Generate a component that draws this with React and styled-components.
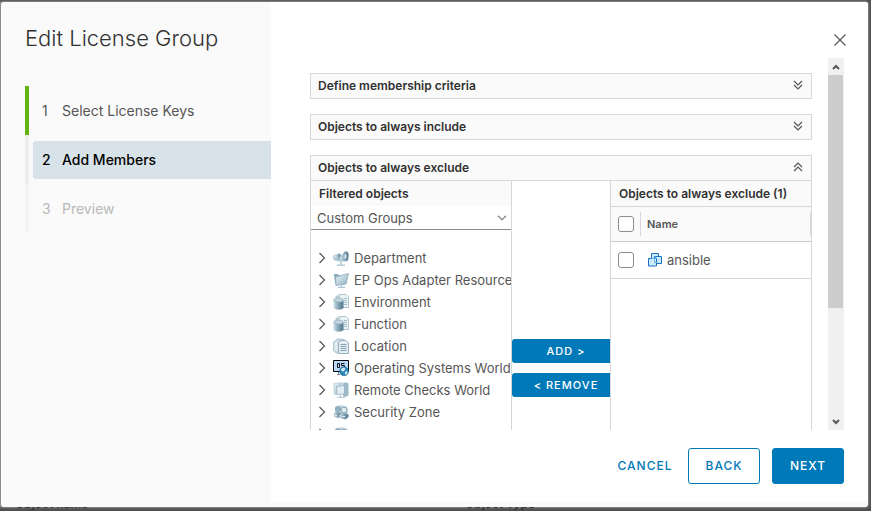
import React from "react";
import styled, { createGlobalStyle } from "styled-components";

const Global = createGlobalStyle`
  *, *::before, *::after { box-sizing: border-box; }
  body { margin: 0; background: #4f4f4f; color: #565656; font: 400 13px/22px Inter, "Open Sans", sans-serif; }
  button, select, input { font: inherit; color: inherit; margin: 0; }
  button { cursor: pointer; }
`;

const Page = styled.div`
  height: 100vh;
  display: flex;
  flex-direction: column;
  padding: 2px 3px 0 0;
`;

const Dialog = styled.section`
  flex: 1;
  min-height: 0;
  display: flex;
  border-left: 1px solid #8c8c8c;
  border-radius: 3px;
  background: #fafafa;
  box-shadow: 0 0 2px 1px #8c8c8c;
  overflow: hidden;
`;

const Backdrop = styled.div`
  flex: none;
  height: 4px;
  display: flex;
  align-items: flex-end;
  overflow: hidden;
  padding-left: 15px;
  color: #333;
  font-size: 12px;
  font-weight: 600;
  line-height: 14px;
`;

const BackdropColumn = styled.span`
  flex: none;
  width: 450px;
`;

const Sidebar = styled.nav`
  flex: none;
  width: 270px;
  padding: 19px 0 0 24px;
`;

const Title = styled.h1`
  margin: 0 0 31px;
  font-size: 22px;
  font-weight: 300;
  line-height: 34px;
  color: #313131;
`;

const Steps = styled.ol`
  list-style: none;
  margin: 0;
  padding: 0;
`;

const Step = styled.li`
  display: flex;
  align-items: center;
  height: 49px;
  padding-left: 4px;
  border-left: 4px solid ${(p) => (p.$state === "done" ? "#60b515" : p.$state === "current" ? "#eee" : "#f4f4f4")};
`;

const StepButton = styled.button`
  flex: 1;
  display: flex;
  gap: 11px;
  height: 38px;
  padding: 0 9px;
  border: 0;
  border-radius: 3px 0 0 3px;
  text-align: left;
  font-size: 14px;
  font-weight: ${(p) => (p.$state === "current" ? 500 : 400)};
  line-height: 38px;
  background: ${(p) => (p.$state === "current" ? "#d8e3e9" : "transparent")};
  color: ${(p) => (p.$state === "done" ? "#565656" : p.$state === "current" ? "#000" : "#b8b8b8")};
`;

const StepNumber = styled.span`
  flex: none;
  width: 9px;
`;

const Main = styled.main`
  flex: 1;
  min-width: 0;
  display: flex;
  flex-direction: column;
  margin-bottom: 5px;
  padding: 29px 24px 18px 39px;
  background: #fff;
`;

const CloseButton = styled.button`
  align-self: flex-end;
  display: grid;
  place-items: center;
  width: 18px;
  height: 18px;
  margin: 0 -5px 9px 0;
  padding: 0;
  border: 0;
  background: none;
`;

const ScrollArea = styled.div`
  flex: 1;
  min-height: 0;
  display: flex;
  gap: 16px;
  overflow: hidden;
`;

const Panels = styled.div`
  flex: 1;
  min-width: 0;
  display: flex;
  flex-direction: column;
  gap: 15px;
  padding-top: 15px;
`;

const Scrollbar = styled.div`
  flex: none;
  width: 16px;
  display: flex;
  flex-direction: column;
  background: #f0f0f0;
`;

const ScrollArrow = styled.button`
  display: grid;
  place-items: center;
  height: 17px;
  padding: 0;
  border: 0;
  background: none;
`;

const ScrollTrack = styled.div`
  flex: 1;
  padding-right: 1px;
`;

const ScrollThumb = styled.div`
  height: 69%;
  background: #cdcdcd;
`;

const Panel = styled.section`
  flex: none;
  border: 1px solid #d7d7d7;
`;

const PanelTitle = styled.h2`
  margin: 0;
  font-size: 12px;
  font-weight: 600;
`;

const PanelToggle = styled.button`
  display: flex;
  justify-content: space-between;
  width: 100%;
  height: 24px;
  padding: 0 8px 0 7px;
  border: 0;
  background: #fafafa;
  color: #313131;
  line-height: 24px;
`;

const PanelBody = styled.div`
  display: grid;
  grid-template-columns: 2fr 100px 2fr;
  height: 320px;
  border-top: 1px solid #d7d7d7;
`;

const Column = styled.div`
  min-width: 0;
  overflow: hidden;
`;

const ColumnTitle = styled.h3`
  margin: 0;
  height: ${(p) => (p.$ruled ? 26 : 25)}px;
  padding-left: 8px;
  border-bottom: ${(p) => (p.$ruled ? "1px solid #d7d7d7" : 0)};
  background: #fafafa;
  color: #313131;
  font-size: 12px;
  font-weight: 600;
  line-height: 25px;
`;

const Picker = styled.label`
  display: grid;
  align-items: center;
  height: 24px;
  border-bottom: 1px solid #8c8c8c;
  > * { grid-area: 1 / 1; }
  > svg { justify-self: end; margin-right: 4px; pointer-events: none; }
`;

const PickerSelect = styled.select`
  appearance: none;
  width: 100%;
  height: 23px;
  padding: 0 6px;
  border: 0;
  background: #fff;
`;

const Tree = styled.ul`
  list-style: none;
  margin: 17px 0 0;
  padding: 0 0 0 6px;
`;

const TreeRow = styled.li`
  display: flex;
  align-items: center;
  height: 22px;
  white-space: nowrap;
  > svg { flex: none; margin: 0 5px 0 6px; }
`;

const ExpandButton = styled.button`
  flex: none;
  display: grid;
  place-items: center;
  width: 10px;
  height: 22px;
  padding: 0;
  border: 0;
  background: none;
`;

const Actions = styled.div`
  display: flex;
  flex-direction: column;
  gap: 10px;
  padding-top: 158px;
  border: solid #d7d7d7;
  border-width: 0 1px;
  overflow: hidden;
`;

const MoveButton = styled.button`
  flex: none;
  width: 108px;
  height: 24px;
  padding: 0;
  border: 0;
  border-radius: 3px;
  background: #0079b8;
  color: #fff;
  font-size: 11px;
  font-weight: 500;
  letter-spacing: 1px;
  line-height: 24px;
`;

const Members = styled.table`
  width: 100%;
  border-collapse: separate;
  border-spacing: 0;
`;

const HeadCell = styled.th`
  height: 35px;
  padding: 0;
  border-bottom: 1px solid #ccc;
  background: #fafafa;
  font-size: 11px;
  font-weight: 600;
  text-align: left;
`;

const HeadInner = styled.div`
  display: flex;
  align-items: center;
  height: 24px;
  padding-left: ${(p) => (p.$check ? 7 : 6)}px;
  border-right: 1px solid #d7d7d7;
`;

const Cell = styled.td`
  height: 37px;
  padding: 0 0 0 7px;
  border-bottom: 1px solid #d7d7d7;
`;

const CheckCol = styled.col`
  width: 30px;
`;

const MemberName = styled.span`
  display: flex;
  align-items: center;
  gap: 5px;
`;

const Check = styled.input`
  display: block;
  appearance: none;
  width: 16px;
  height: 16px;
  border: 1px solid #8c8c8c;
  border-radius: 3px;
  background: #fff;
`;

const Footer = styled.footer`
  flex: none;
  display: flex;
  justify-content: flex-end;
  gap: 12px;
  padding-top: 18px;
`;

const FooterButton = styled.button`
  min-width: ${(p) => (p.$kind === "link" ? 62 : 72)}px;
  height: 36px;
  padding: 0;
  border: ${(p) => (p.$kind === "link" ? "0" : "1px solid #0079b8")};
  border-radius: 3px;
  background: ${(p) => (p.$kind === "solid" ? "#0079b8" : "transparent")};
  color: ${(p) => (p.$kind === "solid" ? "#fff" : "#0079b8")};
  font-size: 12px;
  font-weight: 500;
  letter-spacing: 1px;
`;

const Stroke = ({ w, h, d, width = 1, color = "#565656" }) => (
  <svg width={w} height={h} viewBox={`0 0 ${w} ${h}`} fill="none" stroke={color} strokeWidth={width} aria-hidden="true">
    <path d={d} />
  </svg>
);

const DoubleChevron = ({ up }) => (
  <Stroke w={10} h={22} width={1.2} d={up ? "M1 11l4-4 4 4M1 15l4-4 4 4" : "M1 7l4 4 4-4M1 11l4 4 4-4"} />
);

const Cylinder = () => (
  <>
    <path d="M.5 6v7.200C.5 14.700 2.700 15.700 5.500 15.700s5-1 5-2.500V6z" fill="url(#steel)" />
    <ellipse cx="5.500" cy="6" rx="5" ry="2" fill="#c3d6e0" stroke="#8fabba" strokeWidth=".6" />
  </>
);

const Page2 = () => (
  <>
    <path d="M3 2h8v11H3z" fill="#c8d9e1" stroke="#9fb7c3" strokeWidth=".7" />
    <path d="M6 .5h7L15.500 3v10.500H6z" fill="#eaf3f6" stroke="#9fb7c3" strokeWidth=".8" />
    <path d="M11 4.500h3M11 6.500h3M11 8.500h3M11 10.500h3" stroke="#9db5c1" strokeWidth=".9" />
  </>
);

const glyphs = {
  department: (
    <>
      <path d="M4 15.300h8M8 11.500v3" stroke="#b3cbd7" strokeWidth="1.600" />
      <path d="M3 5l6 2.500 3 3-4 2-5-2z" fill="#a9c4d2" />
      <circle cx="3" cy="7.500" r="2.800" fill="url(#pale)" stroke="#8fabba" strokeWidth=".5" />
      <circle cx="6.200" cy="5.500" r="2" fill="#7fa2b4" />
      <path d="M7.500 7l4-5.500h3l1.200 3-.7 6-3.500 1.500-3.500-1.500z" fill="url(#steel)" />
      <path d="M12 3.500l2 2-1 3.500-2.500-1z" fill="#c3d6e0" />
      <path d="M3.500 10.500l4.500 1.700 5-1.400" stroke="#dce9ef" fill="none" />
    </>
  ),
  folder: (
    <>
      <path d="M.7 2h4.500l1 1.500h7L12 11 2.500 12.500z" fill="#8fb0c1" />
      <path d="M2.700 5L15.500 1.500 13 12l-10 1.500z" fill="url(#pale)" stroke="#7fa0b2" strokeWidth=".7" />
      <path d="M8.500 13v2M5 15.400h7" stroke="#a9c4d2" strokeWidth="1.200" />
    </>
  ),
  database: <><Page2 /><Cylinder /></>,
  location: (
    <>
      <path d="M.5 4L5 .8 11 1.500v13L3 15 .5 12.500z" fill="#c8d9e1" stroke="#9fb7c3" strokeWidth=".7" />
      <path d="M1.500 5l3-2v10l-3-1z" fill="#e3edf2" />
      <path d="M5.500 4.500l2-2h5.500l2.500 2.500v10.500h-10z" fill="#e4eef2" stroke="#83a2b2" strokeWidth=".8" />
      <path d="M7.500 6.500h6M7.500 8.500h6M7.500 10.500h6M7.500 12.500h6" stroke="#88a6b5" />
    </>
  ),
  os: (
    <>
      <path d="M.5.5h15v11H.5z" fill="#b9d8fb" stroke="#000" />
      <path d="M4 14.500h3M5.500 12v2" stroke="#7d8c99" />
      <path d="M4.500 3.500h2v4h-2zM11.500 3.500h-3v2h3v2h-3" fill="none" stroke="#111" />
      <circle cx="11" cy="11.200" r="4.500" fill="#2d86b8" stroke="#226994" strokeWidth=".6" />
      <path d="M8 9l3-1.500 1.500 1.500-2 2.500-2-.5zM12 12l2.500-1-.5 3-2 .5z" fill="#d5edf7" />
    </>
  ),
  remote: (
    <>
      <path d="M.7 1.500L9 .6v11L1.500 12.500z" fill="url(#pale)" stroke="#b3cbd7" strokeWidth=".7" />
      <path d="M10 1l4-.5 1.500 1.300v11.700L12 15l-2-1z" fill="#9db9c7" />
      <path d="M3.500 4.500l8-1v8.200l-7.500 1z" fill="#e1edf3" stroke="#90adbb" strokeWidth=".7" />
      <path d="M7.500 12.500v2M4.500 15.300h7.500" stroke="#b3cbd7" strokeWidth="1.300" />
    </>
  ),
  security: (
    <>
      <path d="M2 3l6-2 6 1.500 1.500 6-5 3H2z" fill="#c8d9e1" />
      <circle cx="5" cy="5" r="3" fill="#8fb0c1" />
      <path d="M.5 12.500V9.500q4-3 8 0v4q-4 1-8-1z" fill="url(#steel)" />
      <circle cx="11" cy="6" r="3" fill="#dce8ee" stroke="#7596a8" strokeWidth=".8" />
      <path d="M6.500 14v-3.500q4.500-3 9 0V13l-3 2.500z" fill="url(#steel)" />
      <path d="M9 12.500h3M2 11.500h2" stroke="#dce9ef" />
    </>
  ),
};

const TreeIcon = ({ kind }) => (
  <svg width="16" height="16" viewBox="0 0 16 16" fill="none" aria-hidden="true">
    <defs>
      <linearGradient id="steel">
        <stop stopColor="#d3e1e8" />
        <stop offset=".4" stopColor="#92b0bf" />
        <stop offset="1" stopColor="#4d748a" />
      </linearGradient>
      <linearGradient id="pale" x2="1" y2="1">
        <stop stopColor="#edf5f8" />
        <stop offset="1" stopColor="#8eafc0" />
      </linearGradient>
    </defs>
    {glyphs[kind]}
  </svg>
);

const GroupIcon = () => (
  <svg width="14" height="14" viewBox="0 0 14 14" fill="#c9eafb" stroke="#1b6fc0" aria-hidden="true">
    <path d="M3.500.5h7v7h-7z" />
    <path d="M6.500 3.500h7v7h-7z" />
    <path d="M.5 5.500h8v7.500h-8z" />
    <path d="M3.500 5.500h4v-2M6.500 6.500v3h3" fill="none" stroke="#62b2e6" />
  </svg>
);

const steps = [
  ["Select License Keys", "done"],
  ["Add Members", "current"],
  ["Preview", "pending"],
];

const groups = [
  ["Department", "department"],
  ["EP Ops Adapter Resources", "folder"],
  ["Environment", "database"],
  ["Function", "database"],
  ["Location", "location"],
  ["Operating Systems World", "os"],
  ["Remote Checks World", "remote"],
  ["Security Zone", "security"],
  ["", "security"],
];

function PanelHeader({ title, open }) {
  return (
    <PanelTitle>
      <PanelToggle type="button" aria-expanded={!!open}>
        {title}
        <DoubleChevron up={open} />
      </PanelToggle>
    </PanelTitle>
  );
}

export default function App() {
  return (
    <Page>
      <Global />
      <Dialog role="dialog" aria-labelledby="dialog-title">
        <Sidebar>
          <Title id="dialog-title">Edit License Group</Title>
          <Steps>
            {steps.map(([label, state], i) => (
              <Step key={label} $state={state}>
                <StepButton type="button" $state={state} disabled={state === "pending"}>
                  <StepNumber>{i + 1}</StepNumber>
                  {label}
                </StepButton>
              </Step>
            ))}
          </Steps>
        </Sidebar>
        <Main>
          <CloseButton type="button" aria-label="Close">
            <Stroke w={14} h={14} width={1.2} d="M1.500 1.500l11 11M12.500 1.500l-11 11" />
          </CloseButton>
          <ScrollArea>
            <Panels>
              <Panel><PanelHeader title="Define membership criteria" /></Panel>
              <Panel><PanelHeader title="Objects to always include" /></Panel>
              <Panel>
                <PanelHeader title="Objects to always exclude" open />
                <PanelBody>
                  <Column>
                    <ColumnTitle>Filtered objects</ColumnTitle>
                    <Picker>
                      <PickerSelect aria-label="Filtered objects" defaultValue="Custom Groups">
                        <option>Custom Groups</option>
                      </PickerSelect>
                      <Stroke w={10} h={6} width={1.3} color="#8c8c8c" d="M1 .8l4 4 4-4" />
                    </Picker>
                    <Tree>
                      {groups.map(([label, kind]) => (
                        <TreeRow key={label}>
                          <ExpandButton type="button" aria-label={`Expand ${label}`}>
                            <Stroke w={8} h={12} width={1.2} d="M1.500 1l5 5-5 5" />
                          </ExpandButton>
                          <TreeIcon kind={kind} />
                          {label}
                        </TreeRow>
                      ))}
                    </Tree>
                  </Column>
                  <Actions>
                    <MoveButton type="button">ADD &gt;</MoveButton>
                    <MoveButton type="button">&lt; REMOVE</MoveButton>
                  </Actions>
                  <Column>
                    <ColumnTitle $ruled>Objects to always exclude (1)</ColumnTitle>
                    <Members>
                      <colgroup><CheckCol /><col /></colgroup>
                      <thead>
                        <tr>
                          <HeadCell><HeadInner $check><Check type="checkbox" aria-label="Select all" /></HeadInner></HeadCell>
                          <HeadCell><HeadInner>Name</HeadInner></HeadCell>
                        </tr>
                      </thead>
                      <tbody>
                        <tr>
                          <Cell><Check type="checkbox" aria-label="Select ansible" /></Cell>
                          <Cell><MemberName><GroupIcon />ansible</MemberName></Cell>
                        </tr>
                      </tbody>
                    </Members>
                  </Column>
                </PanelBody>
              </Panel>
            </Panels>
            <Scrollbar>
              <ScrollArrow type="button" aria-label="Scroll up">
                <Stroke w={8} h={6} width={2} d="M1 5l3-3 3 3" />
              </ScrollArrow>
              <ScrollTrack><ScrollThumb /></ScrollTrack>
              <ScrollArrow type="button" aria-label="Scroll down">
                <Stroke w={8} h={6} width={2} d="M1 1l3 3 3-3" />
              </ScrollArrow>
            </Scrollbar>
          </ScrollArea>
          <Footer>
            <FooterButton type="button" $kind="link">CANCEL</FooterButton>
            <FooterButton type="button" $kind="outline">BACK</FooterButton>
            <FooterButton type="button" $kind="solid">NEXT</FooterButton>
          </Footer>
        </Main>
      </Dialog>
      <Backdrop aria-hidden="true">
        <BackdropColumn>Object name</BackdropColumn>
        <BackdropColumn>Object Type</BackdropColumn>
      </Backdrop>
    </Page>
  );
}
